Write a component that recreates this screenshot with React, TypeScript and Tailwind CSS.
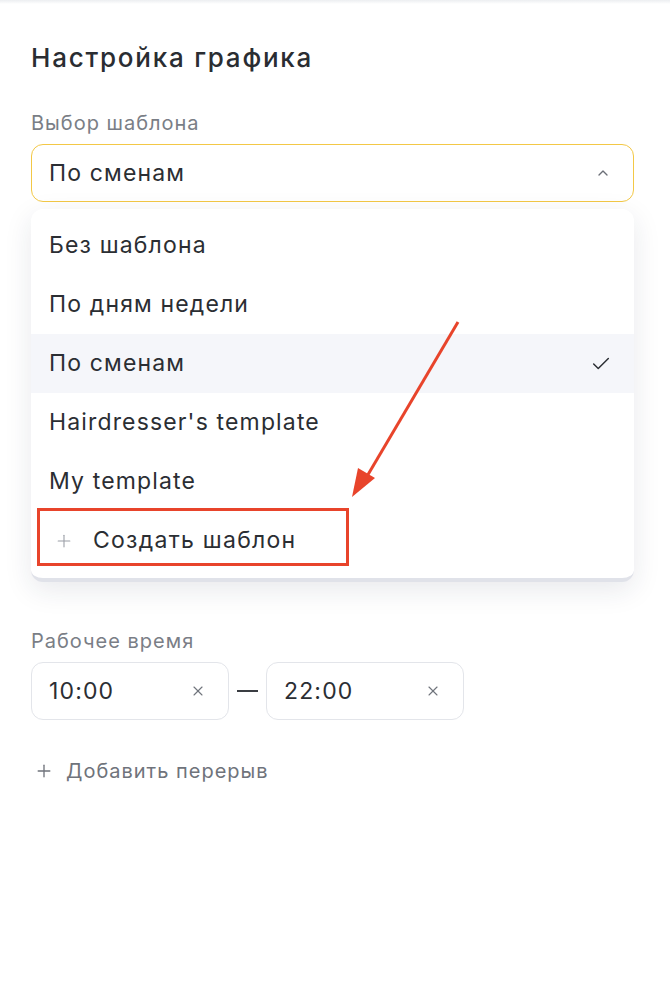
import React from 'react';
import { Check, ChevronUp, Plus, X } from 'lucide-react';

const OPTIONS = [
  { id: 'none', label: 'Без шаблона' },
  { id: 'week', label: 'По дням недели' },
  { id: 'shifts', label: 'По сменам' },
  { id: 'hair', label: "Hairdresser's template" },
  { id: 'my', label: 'My template' },
];

function TimeInput({ value }: { value: string }) {
  return (
    <div className="w-[198px] h-[58px] border border-[#e3e5ea] rounded-[12px] flex items-center justify-between pl-[17px] pr-[22px]">
      <span className="text-[23px] tracking-[0.05em] text-[#2b2e33]">{value}</span>
      <X size={16} strokeWidth={1.6} className="text-[#6f737b]" />
    </div>
  );
}

export default function App() {
  const selected = 'shifts';

  return (
    <div className="relative min-h-[1000px] bg-white font-['Inter',sans-serif] text-[#2b2e33]">
      {/* top edge shadow */}
      <div className="h-[4px] bg-gradient-to-b from-[#eceef1] to-white" />

      <div className="px-[31px] pt-[38px]">
        <h1 className="text-[26px] font-medium leading-[32px] tracking-[0.068em] text-[#2a2d32]">Настройка графика</h1>

        <div className="mt-[37px] text-[20px] leading-[24px] tracking-[0.05em] text-[#7a7e86]">Выбор шаблона</div>

        <div className="mt-[9px] w-[603px] h-[58px] border border-[#f3c846] rounded-[12px] flex items-center justify-between pl-[17px] pr-[22px]">
          <span className="text-[23px] tracking-[0.05em]">По сменам</span>
          <ChevronUp size={16} strokeWidth={2} className="text-[#6b6f77]" />
        </div>

        {/* Dropdown */}
        <div className="mt-[7px] w-[603px] rounded-[12px] bg-white shadow-[0_8px_28px_rgba(30,40,70,0.10)] border-b-[4px] border-[#e0e2e9] overflow-hidden">
          <div className="pt-[7px] pb-[8px]">
            {OPTIONS.map((o) => (
              <div
                key={o.id}
                className={`h-[59px] flex items-center justify-between pl-[18px] pr-[22px] text-[23px] tracking-[0.05em] ${
                  o.id === selected ? 'bg-[#f5f6fa]' : ''
                }`}
              >
                <span>{o.label}</span>
                {o.id === selected && <Check size={22} strokeWidth={1.6} className="text-[#2b2e33]" />}
              </div>
            ))}
            <div className="h-[59px] flex items-center pl-[23px] text-[23px] tracking-[0.055em]">
              <Plus size={20} strokeWidth={1.3} className="text-[#9a9ea6]" />
              <span className="ml-[19px]">Создать шаблон</span>
            </div>
          </div>
        </div>

        <div className="mt-[47px] text-[20px] leading-[24px] tracking-[0.05em] text-[#7a7e86]">Рабочее время</div>
        <div className="mt-[9px] flex items-center gap-[8px]">
          <TimeInput value="10:00" />
          <span className="w-[21px] h-[2px] bg-[#3a3d42]" />
          <TimeInput value="22:00" />
        </div>

        <div className="mt-[36px] flex items-center text-[20px] tracking-[0.05em] text-[#6f737b]">
          <Plus size={20} strokeWidth={1.6} className="ml-[3px]" />
          <span className="ml-[12px]">Добавить перерыв</span>
        </div>
      </div>

      {/* annotation: red box */}
      <div className="absolute left-[37px] top-[508px] w-[312px] h-[58px] border-[3px] border-[#e8442b]" />
      {/* annotation: arrow */}
      <svg className="absolute left-0 top-0 pointer-events-none" width="670" height="1000">
        <line x1="458" y1="322" x2="366" y2="478" stroke="#e8442b" strokeWidth="3" />
        <polygon points="352,497 358,468 375,478" fill="#e8442b" />
      </svg>
    </div>
  );
}
